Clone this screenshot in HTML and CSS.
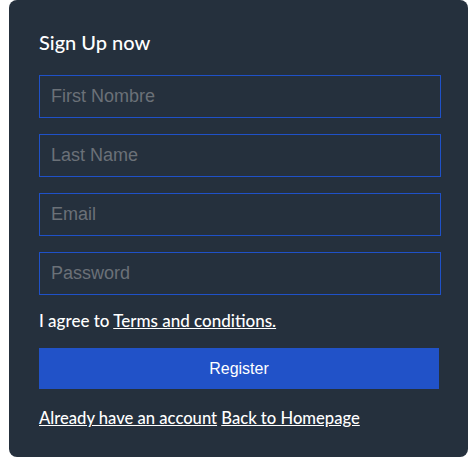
FILE: index.html
```html
<!DOCTYPE html>
<html>
<head>
<meta charset="utf-8">
<link rel="stylesheet" href="styles.css">
</head>
<body>
<div class="card">
  <h2 class="title">Sign Up now</h2>
  <form class="form">
    <input class="field" type="text" placeholder="First Nombre">
    <input class="field" type="text" placeholder="Last Name">
    <input class="field" type="email" placeholder="Email">
    <input class="field" type="password" placeholder="Password">
    <p class="agree">I agree to <a href="#" class="link">Terms and conditions.</a></p>
    <button class="btn" type="button">Register</button>
    <p class="footer"><a href="#" class="link">Already have an account</a> <a href="#" class="link">Back to Homepage</a></p>
  </form>
</div>
</body>
</html>
```
FILE: styles.css
```css
html, body {
  margin: 0;
  padding: 0;
  background: #ffffff;
}
.card {
  margin-left: 9px;
  width: 459px;
  height: 457px;
  box-sizing: border-box;
  background: #25303d;
  border-radius: 8px;
  padding: 28px 28px 0 30px;
  font-family: "Gill Sans", "Lato", "Noto Sans", sans-serif;
  color: #ffffff;
}
.title {
  margin: 0;
  font-size: 20px;
  font-weight: 500;
  line-height: 28px;
  height: 47px;
}
.form {
  display: flex;
  flex-direction: column;
}
.field {
  width: 402px;
  height: 43px;
  box-sizing: border-box;
  margin: 0 0 16px 0;
  padding: 0 11px;
  background: transparent;
  border: 1px solid #1f51c8;
  outline: none;
  font-family: "Liberation Sans", Arial, sans-serif;
  font-size: 18px;
  color: #ffffff;
}
.field::placeholder {
  color: #6b7178;
}
.agree {
  margin: 0;
  font-size: 17px;
  font-weight: 500;
  line-height: 20px;
  height: 37px;
}
.link {
  color: #ffffff;
  text-decoration: underline;
}
.btn {
  width: 400px;
  height: 41px;
  border: none;
  background: #2152c8;
  color: #ffffff;
  font-family: "Liberation Sans", Arial, sans-serif;
  font-size: 16px;
  cursor: pointer;
}
.footer {
  margin: 19px 0 0 0;
  font-size: 16.6px;
  font-weight: 500;
  line-height: 20px;
}
```
